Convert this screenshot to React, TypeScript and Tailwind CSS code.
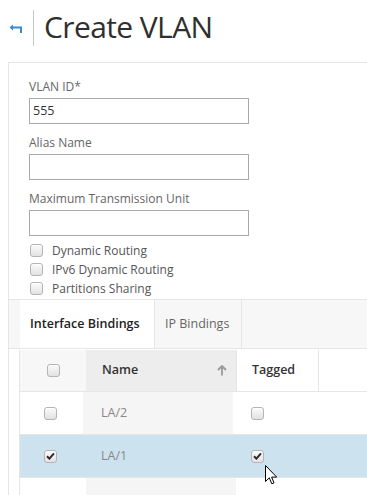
import React from "react";

const Box: React.FC<{ checked?: boolean }> = ({ checked }) => (
  <span className="inline-flex w-[13px] h-[13px] items-center justify-center rounded-[3px] border border-[#b4b4b4] bg-gradient-to-b from-[#fbfbfb] to-[#e2e2e2] shadow-[inset_0_1px_0_#fff]">
    {checked && (
      <svg width="9" height="8" viewBox="0 0 9 8">
        <path d="M1 4.2 L3.4 6.6 L8 1.4" fill="none" stroke="#2b2b2b" strokeWidth="2" />
      </svg>
    )}
  </span>
);

const Field: React.FC<{ label: string; value?: string }> = ({ label, value }) => (
  <div className="flex flex-col">
    <label className="h-[21px] pt-[2px] text-[12px] leading-[19px] text-[#666]">{label}</label>
    <div className="mt-[2px] w-[220px] h-[26px] border border-[#a9a9a9] px-[3px] text-[12.5px] leading-[24px] text-[#333]">
      {value}
    </div>
  </div>
);

const rows = [
  { name: "LA/2", selected: false },
  { name: "LA/1", selected: true },
];

const App: React.FC = () => {
  return (
    <div className="relative w-[367px] h-[495px] overflow-hidden bg-white font-['Open_Sans',sans-serif]">
      {/* header */}
      <div className="flex items-center h-[62px] pb-[7px] pl-[9px]">
        <svg width="14" height="9" viewBox="0 0 14 9" className="mt-[1px]">
          <path d="M4 0.5 L0.5 3.5 L4 6.5 Z" fill="#3f88cc" />
          <path d="M3 3.5 H12 V9" fill="none" stroke="#3f88cc" strokeWidth="2" />
        </svg>
        <div className="ml-[10px] w-px h-[36px] bg-[#c8c8c8]" />
        <h1 className="ml-[10px] text-[30px] leading-none tracking-[-0.6px] text-[#2f2f2f] -mt-[2px]">
          Create VLAN
        </h1>
      </div>

      {/* panel */}
      <div className="ml-[8px] border-l border-t border-[#e6e6e6]">
        <div className="pl-[20px] pt-[12px] pb-[5px] flex flex-col gap-[7px]">
          <Field label="VLAN ID*" value="555" />
          <Field label="Alias Name" />
          <Field label="Maximum Transmission Unit" />
        </div>
        <div className="pl-[21px] pb-[1px] flex flex-col text-[12px] text-[#555]">
          {["Dynamic Routing", "IPv6 Dynamic Routing", "Partitions Sharing"].map((t) => (
            <div key={t} className="flex items-center h-[19px] gap-[9px]">
              <Box />
              <span>{t}</span>
            </div>
          ))}
        </div>

        {/* tabs */}
        <div className="flex h-[50px] border-t border-b border-[#e6e6e6] bg-[#f7f7f7] pl-[11px]">
          <div className="flex items-center bg-white px-[10px] w-[134px] text-[12.5px] font-semibold text-[#222]">
            Interface Bindings
          </div>
          <div className="flex items-center border-l border-r border-[#e6e6e6] px-[10px] w-[88px] text-[12.5px] text-[#666]">
            IP Bindings
          </div>
        </div>

        {/* table */}
        <div className="pl-[10px] pt-px">
          <div className="border-l border-[#e6e6e6] text-[12.5px]">
            <div className="flex h-[42px] bg-[#f7f7f7] border-b border-[#e6e6e6]">
              <div className="w-[66px] flex items-center justify-center pl-[1px]">
                <Box />
              </div>
              <div className="w-[150px] flex items-center justify-between bg-[#ededed] pl-[16px] pr-[9px] font-semibold text-[#333]">
                <span>Name</span>
                <svg width="10" height="11" viewBox="0 0 10 11">
                  <path d="M5 1 V10.5 M1 5 L5 1 L9 5" fill="none" stroke="#999" strokeWidth="1.8" />
                </svg>
              </div>
              <div className="w-[83px] flex items-center border-l border-r border-[#e6e6e6] bg-white pl-[15px] font-semibold text-[#333]">
                Tagged
              </div>
              <div className="flex-1 bg-white" />
            </div>
            {rows.map((r) => (
              <div
                key={r.name}
                className={`flex h-[43px] border-b border-[#e6e6e6] ${r.selected ? "bg-[#cce3ef]" : "bg-white"}`}
              >
                <div className="w-[66px] flex items-center justify-center -ml-[3px]">
                  <Box checked={r.selected} />
                </div>
                <div className={`w-[150px] flex items-center pl-[18px] text-[#888] ${r.selected ? "" : "bg-[#f5f5f5]"}`}>
                  {r.name}
                </div>
                <div className="w-[83px] flex items-center pl-[18px]">
                  <Box checked={r.selected} />
                </div>
              </div>
            ))}
            <div className="flex h-[20px]">
              <div className="w-[66px]" />
              <div className="w-[150px] bg-[#f5f5f5]" />
            </div>
          </div>
        </div>
      </div>

      {/* mouse cursor */}
      <svg width="13" height="21" viewBox="0 0 13 21" className="absolute left-[265px] top-[465px]">
        <path
          d="M0.5 0.5 V16.5 L4.3 12.8 L6.8 18.8 L9 17.9 L6.6 12.1 H11.7 Z"
          fill="#fff"
          stroke="#000"
          strokeWidth="1"
          strokeLinejoin="miter"
        />
      </svg>
    </div>
  );
};

export default App;
